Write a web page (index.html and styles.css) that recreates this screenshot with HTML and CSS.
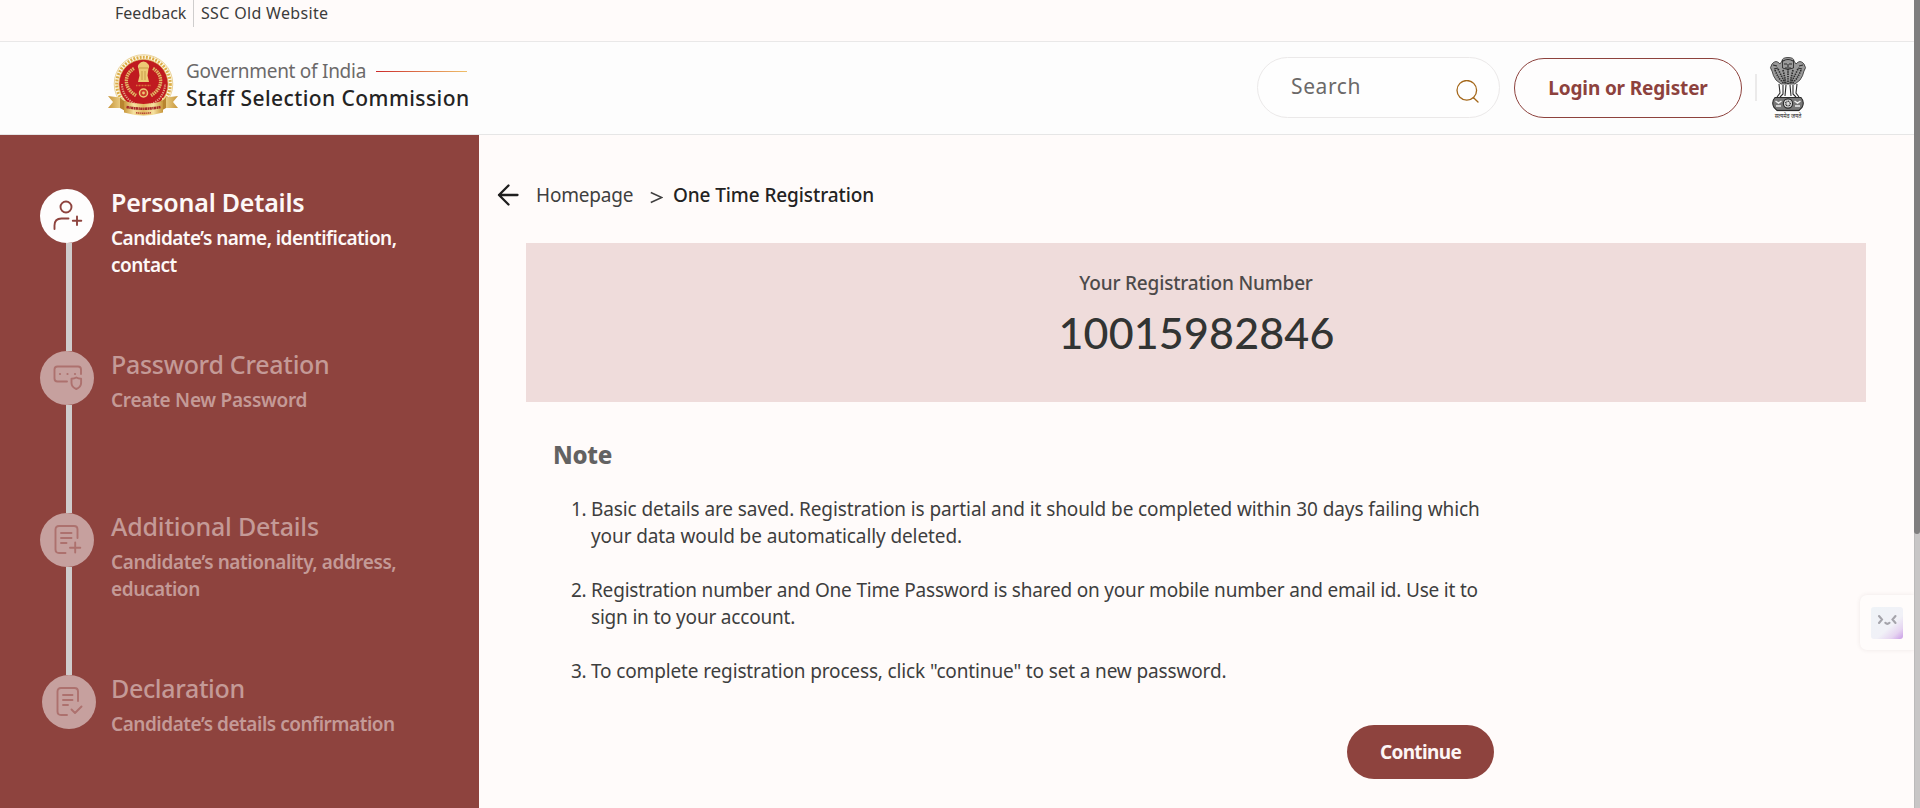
FILE: index.html
```
<!DOCTYPE html>
<html lang="en">
<head>
<meta charset="utf-8">
<title>Staff Selection Commission | One Time Registration</title>
<link rel="stylesheet" href="styles.css">
</head>
<body>
<div class="page">
  <nav class="topbar">
    <a class="feedback">Feedback</a>
    <a class="oldsite">SSC Old Website</a>
  </nav>

  <header class="header">
    <div class="brand">
      <svg class="logo" viewBox="0 0 70 62">
        <defs>
          <linearGradient id="gold" x1="0" y1="0" x2="1" y2="0">
            <stop offset="0" stop-color="#c8963a"/><stop offset=".25" stop-color="#f6e2a0"/>
            <stop offset=".5" stop-color="#e2b962"/><stop offset=".75" stop-color="#f6e2a0"/><stop offset="1" stop-color="#c8963a"/>
          </linearGradient>
        </defs>
        <circle cx="35.500" cy="30" r="29.300" fill="#fdf8e8" stroke="#e8cd8c" stroke-width=".9"/>
        <circle cx="35.500" cy="30" r="26.800" fill="none" stroke="#dcae48" stroke-width="3" stroke-dasharray="1.900 1.300"/>
        <circle cx="35.500" cy="30" r="24.600" fill="#c01a20" stroke="#e0b55c" stroke-width=".8"/>
        <path d="M26 14.500C16 20 15 34 28 41.500M45 14.500C55 20 56 34 43 41.500" fill="none" stroke="#e0b865" stroke-width="3.400" stroke-dasharray="1.600 .7"/>
        <path d="M31 10q1.500-2.500 4.500-2.500t4.500 2.500q2 2 .5 4.500l-1 7 1.500 6.500h-11l1.500-6.500-1-7q-1.500-2.500.5-4.500z" fill="#edca75"/>
        <path d="M34 17v9M37 17v9M31 14h9" stroke="#b98a35" stroke-width=".7"/>
        <path d="M28 31.500h15" stroke="#d9743a" stroke-width="1.300" stroke-dasharray="1 .5"/>
        <circle cx="35.500" cy="39" r="4" fill="#cc3a28" stroke="#edca75" stroke-width="1.500"/>
        <circle cx="35.500" cy="39" r="1.400" fill="#edca75"/>
        <path d="M14 30 A21.500 21.500 0 0 0 57 30" fill="none" stroke="#dfa080" stroke-width="2" stroke-dasharray="1.300 1"/>
        <path d="M0 42l16 2v10L0 54l5-6zM70 42l-16 2v10l16 0-5-6z" fill="url(#gold)"/>
        <path d="M12 43q2 4 8 5l-1 10-7-4zM58 43q-2 4-8 5l1 10 7-4z" fill="#b8842f"/>
        <path d="M16 47q19.500 6 39 0v11.500q-19.500 6-39 0z" fill="url(#gold)"/>
        <path d="M18.500 53q17 3.500 34 0" fill="none" stroke="#a5292a" stroke-width="2.600" stroke-dasharray="2.400 .5 1.300 .4"/>
        <path d="M28 58.800q7.500 .8 15 0" fill="none" stroke="#b64432" stroke-width="1.400" stroke-dasharray="1.500 .5"/>
      </svg>
      <div class="brand-text">
        <div class="gov"><span>Government of India</span><i class="gov-line"></i></div>
        <div class="ssc">Staff Selection Commission</div>
      </div>
    </div>

    <div class="actions">
      <div class="search">
        <span>Search</span>
        <svg class="search-icon" viewBox="0 0 24 24"><circle cx="10.800" cy="10.300" r="9.800"/><path d="M17.500 17.800l4.500 4.200"/></svg>
      </div>
      <button class="login">Login or Register</button>
      <i class="rule"></i>
      <svg class="emblem" viewBox="0 0 36 62">
        <g stroke="#2c2c2c" fill="none">
          <path d="M12 4q0-3.500 6-3.500t6 3.500l2 3q4-5 8 0 3 4 0 7-1 5-4 9l-5 4H11l-5-4Q3 19 2 14q-3-3 0-7 4-5 8 0z" fill="#9a9a9a" stroke-width=".8"/>
          <path d="M5 13q4 10 9 13M31 13q-4 10-9 13M18 12v15M8 12q4 8 7 14M28 12q-4 8-7 14M13 13q2 8 3 14M23 13q-2 8-3 14" stroke-width="1.700" stroke-dasharray="1.400 .900"/>
          <path d="M13 4q5-3 10 0M14 7h3M19 7h3M18 7v3M15 11h6M3 8l4 1M33 8l-4 1M4 12l4-1M32 12l-4-1" stroke-width="1.100"/>
          <path d="M12.500 3v8q5 3 11 0V3" stroke-width=".9"/>
          <path d="M9 27l1 9-3 4M13 28v9l-3 3M16 28l-1 11M20 28l1 11M23 28v9l3 3M27 27l-1 9 3 4" stroke-width="1.100"/>
          <path d="M5 40.500h26q4 4.500 1 10l-3 3H7l-3-3q-3-5.500 1-10z" fill="#777" stroke-width="1.100"/>
          <circle cx="18" cy="46.500" r="4.600" fill="#ddd" stroke-width="1.200"/>
          <circle cx="18" cy="46.500" r="2.300" stroke-width="1.500" stroke-dasharray=".8 .6"/>
          <path d="M5.500 44l3 2 3-2M6 49h5M24.500 44l3 2 3-2M25 49h5" stroke="#eee" stroke-width="1.500"/>
          <path d="M7 53.500h22" stroke-width="1.200"/>
        </g>
        <text class="motto" x="18" y="60.800" text-anchor="middle">सत्यमेव जयते</text>
      </svg>
    </div>
  </header>

  <div class="body">
    <aside class="sidebar">
      <div class="step active">
        <div class="rail"><div class="dot">
          <svg viewBox="0 0 54 54"><circle cx="26" cy="18" r="5.500"/><path d="M14.500 40v-3.500q0-7 7-7H28.500M37 27.500v8.500M32.800 31.700h8.500"/></svg>
        </div></div>
        <div class="step-text"><h3 class="t1">Personal Details</h3><p class="s1">Candidate’s name, identification,<br>contact</p></div>
      </div>
      <div class="step">
        <div class="rail"><div class="dot">
          <svg viewBox="0 0 54 54"><path d="M27 30.500H17.500q-3 0-3-3V18.500q0-3 3-3H38q3 0 3 3V23"/><path d="M36.300 26.500q2 1.300 4.800 1.300v4.200q0 4-4.800 6-4.800-2-4.800-6v-4.200q2.800 0 4.800-1.300z"/><path d="M20 23h.01M27.500 23h.01M35 23h.01" class="pts"/></svg>
        </div></div>
        <div class="step-text"><h3 class="t2">Password Creation</h3><p class="s2">Create New Password</p></div>
      </div>
      <div class="step">
        <div class="rail"><div class="dot">
          <svg viewBox="0 0 54 54"><path d="M25.500 40H19q-3.500 0-3.500-3.500v-20q0-3.500 3.500-3.500H34q3.500 0 3.500 3.500V25M21 20H31.500M21 25H31.500M21 30h5.500M35.200 29.500v10M30 34.700h10.300"/></svg>
        </div></div>
        <div class="step-text"><h3 class="t3">Additional Details</h3><p class="s3">Candidate’s nationality, address,<br>education</p></div>
      </div>
      <div class="step last">
        <div class="rail"><div class="dot">
          <svg viewBox="0 0 54 54"><path d="M25 40H19q-3.500 0-3.500-3.500v-20q0-3.500 3.500-3.500H32.500q3.500 0 3.500 3.500V26M21 20H30.500M21 25H30.500M21 30h5M29.500 34.500l3.500 3.500 6.500-6.500"/></svg>
        </div></div>
        <div class="step-text"><h3 class="t4">Declaration</h3><p class="s4">Candidate’s details confirmation</p></div>
      </div>
    </aside>

    <main class="main">
      <div class="crumbs">
        <svg class="back" viewBox="0 0 22 22"><path d="M20.500 11H2M11.500 1.500L2 11l9.500 9.500"/></svg>
        <span class="home">Homepage</span>
        <svg class="sep" viewBox="0 0 13 13"><path d="M.8 1.500l11 5-11 5"/></svg>
        <span class="here">One Time Registration</span>
      </div>
      <section class="regbox">
        <div class="reg-label">Your Registration Number</div>
        <div class="reg-number">10015982846</div>
      </section>
      <section class="note">
        <h2>Note</h2>
        <ol>
          <li><span class="num">1.</span><span class="l1">Basic details are saved. Registration is partial and it should be completed within 30 days failing which<br>your data would be automatically deleted.</span></li>
          <li><span class="num">2.</span><span class="l2">Registration number and One Time Password is shared on your mobile number and email id. Use it to<br>sign in to your account.</span></li>
          <li><span class="num">3.</span><span class="l3">To complete registration process, click "continue" to set a new password.</span></li>
        </ol>
        <button class="continue">Continue</button>
      </section>
    </main>
  </div>
</div>

<div class="assistant">
  <svg viewBox="0 0 32 32">
    <defs><linearGradient id="face" x1=".1" y1="0" x2="1" y2="1">
      <stop offset="0" stop-color="#eff3f7"/><stop offset=".58" stop-color="#f1f1f7"/><stop offset=".8" stop-color="#e6d5f1"/><stop offset="1" stop-color="#c99be6"/>
    </linearGradient></defs>
    <rect width="32" height="32" rx="3" fill="url(#face)"/>
    <path d="M8 9l3 3.500L8 16M24.500 9l-3 3.500 3 3.500M14.300 15.800q2 2.200 4.200 0" fill="none" stroke="#a5a4ab" stroke-width="2.100" stroke-linecap="round"/>
  </svg>
</div>
<div class="scroll"><div class="thumb"></div></div>
</body>
</html>
```
FILE: styles.css
```
* { box-sizing: border-box; }
body { margin: 0; background: #fffbfa; font-family: "Noto Sans", "Open Sans", sans-serif; overflow: hidden; }
h2, h3, p, ol { margin: 0; padding: 0; }
button { font-family: inherit; padding: 0; }
.page { width: 1914px; height: 808px; display: flex; flex-direction: column; }

.topbar { flex: none; height: 42px; padding-left: 115px; display: flex; align-items: flex-start; font-size: 16px; line-height: 26px; color: #3c3b3b; border-bottom: 1px solid #e9e8e8; }
.feedback { width: 79px; height: 27px; border-right: 1px solid #cfcdcd; letter-spacing: .02px; }
.oldsite { padding-left: 7px; letter-spacing: .33px; }

.header { flex: none; height: 93px; background: #fdfdfd; border-bottom: 1px solid #e6e6e6; display: flex; justify-content: space-between; align-items: flex-start; padding: 12px 108px 0 108px; }
.brand { display: flex; gap: 8px; }
.logo { width: 70px; height: 62px; }
.brand-text { padding-top: 4px; }
.gov { display: flex; align-items: center; line-height: 27px; font-size: 19px; letter-spacing: -.28px; color: #6c6a6a; }
.gov-line { width: 91px; height: 1px; margin: -1px 0 0 10px; background: linear-gradient(90deg, #cc2a2a, #efc06a); }
.ssc { font-size: 21px; line-height: 27px; font-weight: 500; letter-spacing: .42px; color: #242323; }
.actions { display: flex; align-items: flex-start; padding-top: 3px; }
.search { width: 243px; height: 61px; border: 1px solid #ebe9e9; border-radius: 31px; background: #fefefe; display: flex; justify-content: space-between; padding: 0 19px 0 33px; font-size: 21px; line-height: 56px; letter-spacing: .6px; color: #6b6969; }
.search-icon { width: 24px; height: 24px; margin-top: 22px; fill: none; stroke: #a4681b; stroke-width: 1.300; stroke-linecap: round; }
.login { width: 228px; height: 60px; margin: 1px 13px 0 14px; border: 1px solid #8d423d; border-radius: 30px; background: #fefdfd; color: #8d423d; font-size: 19px; font-weight: 700; letter-spacing: -.15px; line-height: 57px; }
.rule { width: 2px; height: 27px; margin: 17px 13px 0 0; background: #ebeaea; }
.emblem { width: 36px; height: 62px; overflow: visible; }
.motto { font-size: 5.500px; fill: #222; }

.body { flex: 1; min-height: 0; display: flex; }
.sidebar { width: 479px; background: #8e433e; padding: 54px 0 0 40px; }
.step { display: flex; height: 162px; gap: 17px; }
.step.last { height: 119px; }
.rail { width: 54px; background: linear-gradient(#cfcccc, #cfcccc) 26px 54px / 6px 108px no-repeat; }
.dot { width: 54px; height: 54px; border-radius: 50%; background: #c6a09e; }
.dot svg { display: block; width: 54px; height: 54px; fill: none; stroke: #ad716e; stroke-width: 1.900; stroke-linecap: round; stroke-linejoin: round; }
.dot .pts { stroke-width: 2.200; }
.active .dot { background: #fefdfd; }
.active .dot svg { stroke: #8e433e; }
.last .rail { background: none; }
.last .dot { margin-left: 2px; }
.step-text { margin-top: -4px; white-space: nowrap; color: #c49a97; }
.step h3 { font-size: 25px; line-height: 34px; font-weight: 500; }
.step p { margin-top: 6px; font-size: 19px; line-height: 27px; font-weight: 600; }
.active .step-text { color: #fdf8f7; }
.step.active h3 { font-weight: 600; }
.t1 { letter-spacing: -.22px; }
.s1 { letter-spacing: -.55px; }
.t2 { letter-spacing: -.28px; }
.s2 { letter-spacing: -.27px; }
.t3 { letter-spacing: -.18px; }
.s3 { letter-spacing: -.43px; }
.t4 { letter-spacing: -.35px; }
.s4 { letter-spacing: -.48px; }

.main { flex: 1; padding: 46px 48px 0 47px; }
.crumbs { display: flex; align-items: center; height: 27px; margin-left: -29px; font-size: 19px; line-height: 27px; white-space: nowrap; }
.back { width: 22px; height: 22px; margin-top: 1px; fill: none; stroke: #1f1e1e; stroke-width: 2.300; stroke-linecap: round; stroke-linejoin: round; }
.home { width: 98px; margin: 2px 16px 0 17px; color: #403f3f; letter-spacing: -.18px; }
.sep { width: 13px; height: 13px; margin-top: 5px; fill: none; stroke: #403f3f; stroke-width: 1.500; }
.here { margin: 2px 0 0 10px; font-weight: 500; color: #232222; letter-spacing: -.1px; }
.regbox { height: 159px; margin-top: 35px; padding-top: 27px; background: #efdcdb; text-align: center; }
.reg-label { font-size: 19px; line-height: 27px; font-weight: 500; letter-spacing: -.18px; color: #4c4a4a; }
.reg-number { margin-top: 6px; padding-left: 1px; font-family: Lato, "Noto Sans", sans-serif; font-size: 43px; line-height: 60px; font-weight: 500; letter-spacing: .15px; color: #323433; }
.note { width: 968px; padding: 37px 0 0 27px; display: flex; flex-direction: column; }
.note h2 { font-size: 24px; line-height: 32px; font-weight: 800; letter-spacing: -.3px; color: #636262; }
.note ol { list-style: none; margin: 25px 0 40px 18px; display: flex; flex-direction: column; gap: 27px; font-size: 19px; line-height: 27px; color: #3e3e3e; white-space: nowrap; }
.note li { display: flex; }
.num { width: 20px; letter-spacing: -.3px; }
.l1 { letter-spacing: -.1px; }
.l2 { letter-spacing: -.195px; }
.l3 { letter-spacing: -.14px; }
.continue { align-self: flex-end; width: 147px; height: 54px; border: 0; border-radius: 27px; background: #8e433e; color: #fdf6f5; font-size: 19px; font-weight: 700; letter-spacing: -.65px; }

.assistant { position: fixed; right: 6px; top: 595px; width: 54px; height: 55px; padding: 12px 0 0 11px; border-radius: 7px 0 0 7px; background: #fffcfb; box-shadow: 0 0 4px rgba(90, 60, 60, .1); }
.assistant svg { display: block; width: 32px; height: 32px; }
.scroll { position: fixed; right: 0; top: 0; width: 6px; height: 808px; background: #c8c6c6; border-left: 1px solid #bcbaba; }
.thumb { width: 6px; height: 534px; margin-left: -1px; border-radius: 0 0 3px 3px; background: #7f7e7e; }
```
